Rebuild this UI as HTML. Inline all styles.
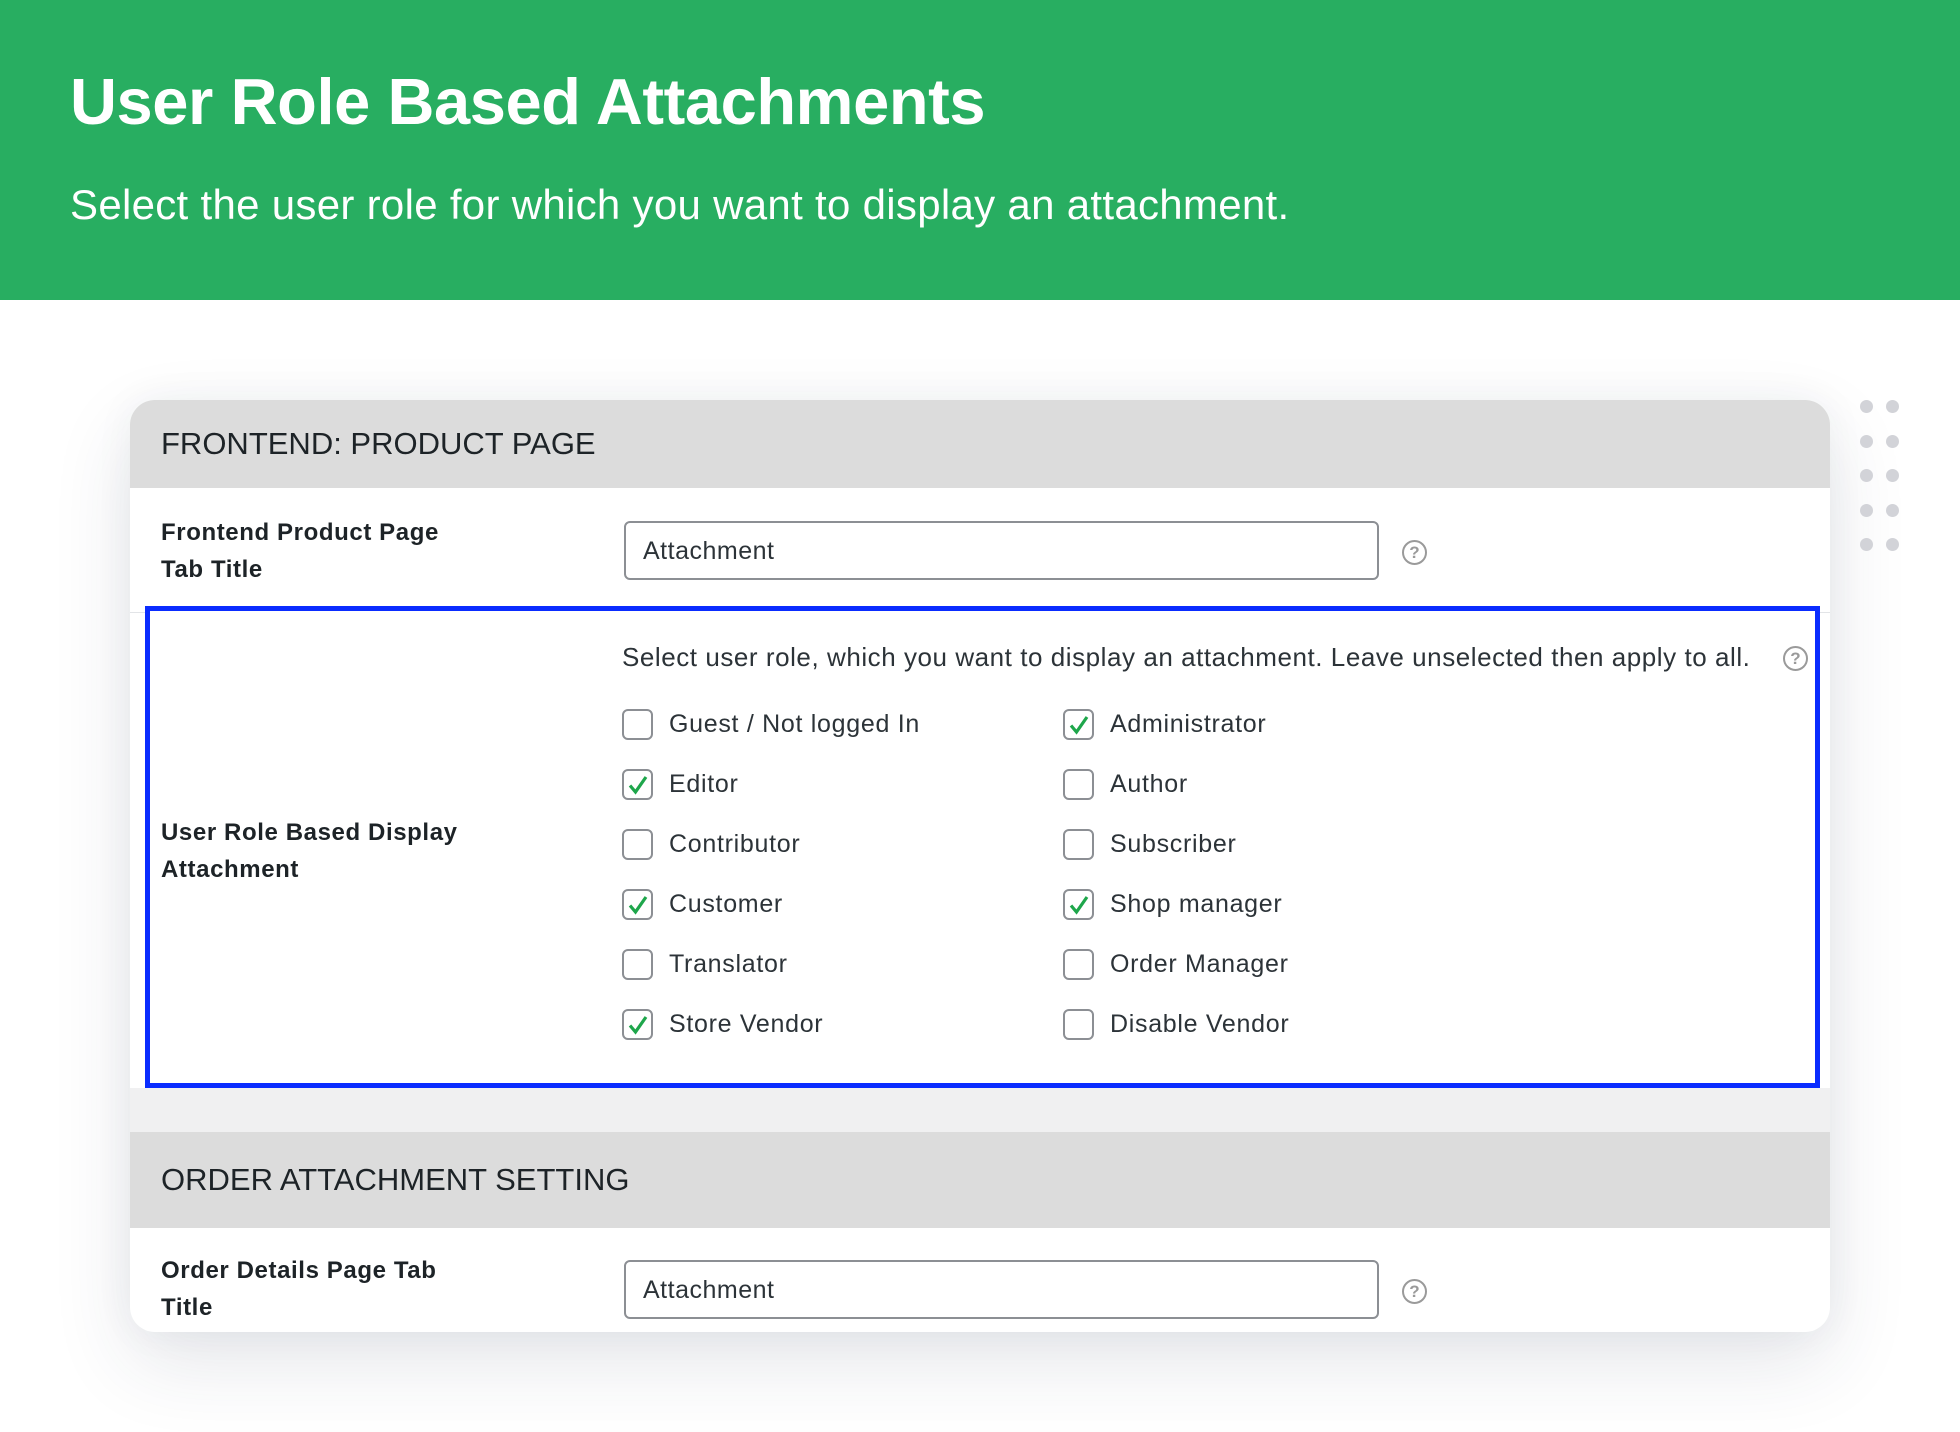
<!DOCTYPE html>
<html><head><meta charset="utf-8"><style>
*{margin:0;padding:0;box-sizing:border-box}
body{width:1960px;height:1432px;background:#fff;font-family:"Liberation Sans",sans-serif;position:relative;overflow:hidden;color:#1d2327}
.hero{position:absolute;left:0;top:0;width:1960px;height:300px;background:#28ae61}
.hero h1{position:absolute;left:70px;top:64px;font-size:65px;font-weight:700;color:#fff;letter-spacing:-0.4px}
.hero p{position:absolute;left:70px;top:181px;font-size:42px;color:#fff;letter-spacing:0.3px}
.card{position:absolute;left:130px;top:400px;width:1700px;height:932px;background:#fff;border-radius:25px;overflow:hidden;box-shadow:0 30px 80px rgba(40,50,80,0.12),0 0 40px rgba(40,50,80,0.05)}
.hd{position:absolute;left:0;width:1700px;background:#dcdcdc;font-size:31px;color:#1d2327;padding-left:31px}
.lbl{position:absolute;left:31px;font-size:24px;font-weight:700;line-height:37px;letter-spacing:0.6px}
.inp{position:absolute;left:494px;width:755px;height:59px;border:2px solid #8c8f94;border-radius:6px;font-size:25px;padding:14px 0 0 17px;color:#2c3338;letter-spacing:0.5px}
.help{position:absolute;width:25px;height:25px;border:2px solid #9a9a9a;border-radius:50%;color:#9a9a9a;font-size:17px;text-align:center;line-height:21px;font-weight:700}
.cb{position:absolute;width:31px;height:31px;border:2px solid #8c8f94;border-radius:6px}
.cb svg{position:absolute;left:3px;top:3px}
.cl{position:absolute;font-size:25px;color:#2c3338;letter-spacing:0.7px}
.dot{position:absolute;width:13px;height:13px;border-radius:50%;background:#d2d3d8}
</style></head><body>
<div class="hero"><h1>User Role Based Attachments</h1><p>Select the user role for which you want to display an attachment.</p></div>

<div class="card">
 <div class="hd" style="top:0;height:88px;line-height:88px">FRONTEND: PRODUCT PAGE</div>
 <div class="lbl" style="top:114px">Frontend Product Page<br>Tab Title</div>
 <div class="inp" style="top:121px">Attachment</div>
 <div class="help" style="left:1272px;top:140px">?</div>
 <div style="position:absolute;left:0;top:212px;width:1700px;height:1px;background:#e2e4e7"></div>
 <div style="position:absolute;left:0;top:688px;width:1700px;height:44px;background:#f0f0f1"></div>
 <div style="position:absolute;left:15px;top:206px;width:1675px;height:482px;border:5px solid #0a2cff;background:#fff"></div>
 <div class="lbl" style="top:414px">User Role Based Display<br>Attachment</div>
 <div class="cl" style="left:492px;top:242px;font-size:26px;letter-spacing:0.55px">Select user role, which you want to display an attachment. Leave unselected then apply to all.</div>
 <div class="help" style="left:1653px;top:246px">?</div>

 <div class="hd" style="top:732px;height:96px;line-height:96px">ORDER ATTACHMENT SETTING</div>
 <div class="lbl" style="top:852px">Order Details Page Tab<br>Title</div>
 <div class="inp" style="top:860px">Attachment</div>
 <div class="help" style="left:1272px;top:879px">?</div>
</div>

<div id="cbs"></div>
<script>
var items=[["Guest / Not logged In",0,"Administrator",1],["Editor",1,"Author",0],["Contributor",0,"Subscriber",0],["Customer",1,"Shop manager",1],["Translator",0,"Order Manager",0],["Store Vendor",1,"Disable Vendor",0]];
var h="",chk='<svg width="22" height="22" viewBox="0 0 22 22"><path d="M3 11.5 L8.5 18 L19 3" fill="none" stroke="#1ea64b" stroke-width="3.2"/></svg>';
items.forEach(function(r,i){var y=709+i*60;
h+='<div class="cb" style="left:622px;top:'+y+'px">'+(r[1]?chk:'')+'</div><div class="cl" style="left:669px;top:'+(y+1)+'px">'+r[0]+'</div>';
h+='<div class="cb" style="left:1063px;top:'+y+'px">'+(r[3]?chk:'')+'</div><div class="cl" style="left:1110px;top:'+(y+1)+'px">'+r[2]+'</div>';});
document.getElementById('cbs').innerHTML=h;
</script>
<div class="dot" style="left:1860px;top:400px"></div><div class="dot" style="left:1886px;top:400px"></div>
<div class="dot" style="left:1860px;top:435px"></div><div class="dot" style="left:1886px;top:435px"></div>
<div class="dot" style="left:1860px;top:469px"></div><div class="dot" style="left:1886px;top:469px"></div>
<div class="dot" style="left:1860px;top:504px"></div><div class="dot" style="left:1886px;top:504px"></div>
<div class="dot" style="left:1860px;top:538px"></div><div class="dot" style="left:1886px;top:538px"></div>
</body></html>
